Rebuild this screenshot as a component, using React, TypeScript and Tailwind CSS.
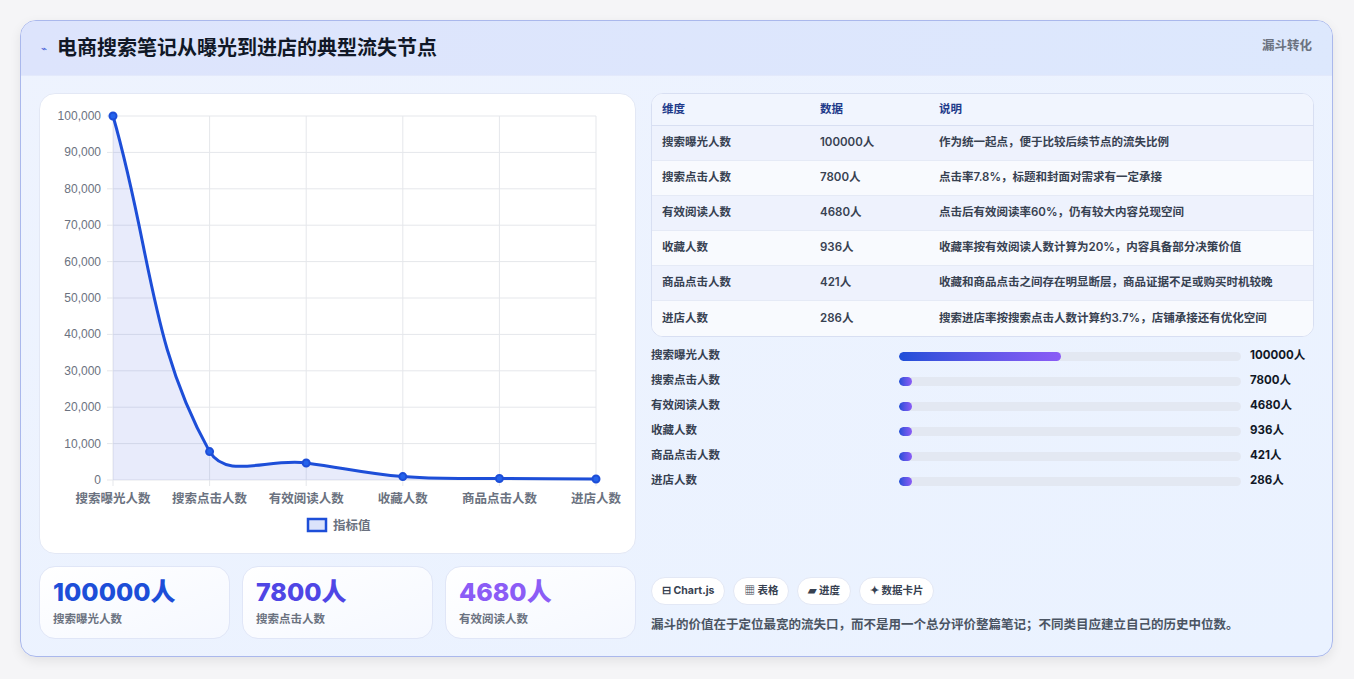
import React from "react";

const labels = ["搜索曝光人数", "搜索点击人数", "有效阅读人数", "收藏人数", "商品点击人数", "进店人数"];
const values = [100000, 7800, 4680, 936, 421, 286];
const notes = [
  "作为统一起点，便于比较后续节点的流失比例",
  "点击率7.8%，标题和封面对需求有一定承接",
  "点击后有效阅读率60%，仍有较大内容兑现空间",
  "收藏率按有效阅读人数计算为20%，内容具备部分决策价值",
  "收藏和商品点击之间存在明显断层，商品证据不足或购买时机较晚",
  "搜索进店率按搜索点击人数计算约3.7%，店铺承接还有优化空间",
];

const X0 = 73, X1 = 556, Y0 = 22, Y1 = 386;
const pts = values.map((v, i) => ({ x: X0 + ((X1 - X0) * i) / 5, y: Y1 - (v / 100000) * (Y1 - Y0) }));

function pathD() {
  const t = 0.4;
  const cps = pts.map((cur, i) => {
    const prev = pts[i - 1] || cur;
    const next = pts[i + 1] || cur;
    const d01 = Math.hypot(cur.x - prev.x, cur.y - prev.y);
    const d12 = Math.hypot(next.x - cur.x, next.y - cur.y);
    const s01 = d01 / (d01 + d12 || 1);
    const s12 = d12 / (d01 + d12 || 1);
    const fa = t * s01, fb = t * s12;
    return {
      p: { x: cur.x - fa * (next.x - prev.x), y: cur.y - fa * (next.y - prev.y) },
      n: { x: cur.x + fb * (next.x - prev.x), y: cur.y + fb * (next.y - prev.y) },
    };
  });
  let d = `M${pts[0].x},${pts[0].y}`;
  for (let i = 1; i < pts.length; i++) {
    const a = cps[i - 1].n, b = cps[i].p;
    d += ` C${a.x},${Math.min(a.y, Y1)} ${b.x},${Math.min(b.y, Y1)} ${pts[i].x},${pts[i].y}`;
  }
  return d;
}

function Chart() {
  const d = pathD();
  return (
    <svg width="597" height="460" viewBox="0 0 597 460" className="block">
      {Array.from({ length: 11 }).map((_, i) => {
        const y = Y0 + (i * (Y1 - Y0)) / 10;
        return (
          <g key={i}>
            <line x1={X0 - 6} x2={X1} y1={y} y2={y} stroke="#e5e7eb" />
            <text x={61} y={y + 4} textAnchor="end" fontSize="12" fill="#6b7280" fontFamily="Liberation Sans, sans-serif">
              {(100000 - i * 10000).toLocaleString("en-US")}
            </text>
          </g>
        );
      })}
      {pts.map((p, i) => (
        <line key={i} x1={p.x} x2={p.x} y1={Y0} y2={Y1 + 6} stroke="#e5e7eb" />
      ))}
      <path d={`${d} L${X1},${Y1} L${X0},${Y1} Z`} fill="rgba(99,120,230,0.15)" />
      <path d={d} fill="none" stroke="#1d4ed8" strokeWidth="3" />
      {pts.map((p, i) => (
        <circle key={i} cx={p.x} cy={p.y} r="3.5" fill="#2563eb" stroke="#1d4ed8" strokeWidth="2" />
      ))}
      {pts.map((p, i) => (
        <text key={i} x={p.x} y={409} textAnchor="middle" fontSize="12.5" fontWeight="600" fill="#6b7280" fontFamily="'Noto Sans CJK SC', sans-serif">
          {labels[i]}
        </text>
      ))}
      <rect x={268} y={425} width={18} height={12} fill="#dbe3fb" stroke="#1d4ed8" strokeWidth="2.5" />
      <text x={293} y={436} fontSize="12.5" fontWeight="600" fill="#6b7280" fontFamily="'Noto Sans CJK SC', sans-serif">指标值</text>
    </svg>
  );
}

export default function App() {
  const font = { fontFamily: "Inter, 'Noto Sans CJK SC', sans-serif" };
  return (
    <div className="w-[1354px] h-[679px] bg-[#f5f5f7] pt-5 px-5" style={font}>
      <div className="w-[1313px] h-[637px] rounded-2xl border border-[#aab8ec] bg-gradient-to-br from-[#eef3fe] to-[#eaf2ff] shadow-[0_4px_12px_rgba(0,0,0,0.08)] overflow-hidden flex flex-col">
        <div className="h-[55px] shrink-0 bg-gradient-to-r from-[#dde4fc] to-[#dde8fd] flex items-center justify-between pl-5 pr-5 border-b border-[#e3e9fb]">
          <div className="flex items-center gap-2.5">
            <span className="text-[#4a63d8] text-[10px]">⌁</span>
            <span className="text-[20px] font-bold text-[#111827]">电商搜索笔记从曝光到进店的典型流失节点</span>
          </div>
          <span className="self-start mt-4 text-[12.5px] font-semibold text-[#6b7280]">漏斗转化</span>
        </div>
        <div className="flex gap-[15px] pl-[18px] pr-[18px] pt-[17px]">
          <div className="w-[597px] flex flex-col gap-[12px]">
            <div className="h-[461px] bg-white rounded-2xl border border-[#e3e8f5]">
              <Chart />
            </div>
            <div className="flex gap-3">
              {[["100000人", "text-[#1d4ed8]", "搜索曝光人数"], ["7800人", "text-[#4f46e5]", "搜索点击人数"], ["4680人", "text-[#8b5cf6]", "有效阅读人数"]].map(([v, c, l]) => (
                <div key={l} className="flex-1 h-[73px] rounded-2xl border border-[#e0e6f7] bg-gradient-to-br from-white to-[#f5f8ff] px-[13px] pt-[9px]">
                  <div className={`text-[25px] font-extrabold leading-[32px] ${c}`}>{v}</div>
                  <div className="text-[11.5px] font-semibold text-[#6b7280] mt-[3px]">{l}</div>
                </div>
              ))}
            </div>
          </div>
          <div className="flex-1 flex flex-col">
            <div className="rounded-xl border border-[#d8dff2] overflow-hidden bg-white">
              <div className="flex h-[32px] items-center bg-[#f1f5fe] border-b border-[#d8dff2] text-[11.5px] font-semibold text-[#1e3a8a]">
                <div className="w-[158px] pl-[10px]">维度</div>
                <div className="w-[119px] pl-[10px]">数据</div>
                <div className="pl-[10px]">说明</div>
              </div>
              {labels.map((l, i) => (
                <div key={l} className={`flex h-[35px] items-center text-[11.5px] font-semibold text-[#374151] ${i < 5 ? "border-b border-[#e5eaf6]" : ""} ${i % 2 === 0 ? "bg-[#eef2fd]" : "bg-[#f8fafe]"}`}>
                  <div className="w-[158px] pl-[10px]">{l}</div>
                  <div className="w-[119px] pl-[10px]">{values[i]}人</div>
                  <div className="pl-[10px]">{notes[i]}</div>
                </div>
              ))}
            </div>
            <div className="flex flex-col gap-[7px] mt-[10px]">
              {labels.map((l, i) => (
                <div key={l} className="flex items-center h-[18px] text-[11.5px] font-semibold text-[#374151]">
                  <div className="w-[248px]">{l}</div>
                  <div className="w-[342px] h-[9px] rounded-full bg-[#e3e8f2] overflow-hidden">
                    <div className="h-full rounded-full bg-gradient-to-r from-[#1d4ed8] to-[#8b5cf6]" style={{ width: `${Math.max(13, (values[i] / 100000) * 162)}px` }} />
                  </div>
                  <div className="pl-[9px] font-bold text-[#111827]">{values[i]}人</div>
                </div>
              ))}
            </div>
            <div className="flex gap-[8px] mt-[87px]">
              {["⊟ Chart.js", "▦ 表格", "▰ 进度", "✦ 数据卡片"].map((c) => (
                <div key={c} className="h-[28px] px-[10px] flex items-center rounded-full bg-white border border-[#e3e8f5] text-[10.5px] font-bold text-[#374151]">{c}</div>
              ))}
            </div>
            <div className="mt-[11px] text-[12.5px] font-semibold text-[#4b5563]">漏斗的价值在于定位最宽的流失口，而不是用一个总分评价整篇笔记；不同类目应建立自己的历史中位数。</div>
          </div>
        </div>
      </div>
    </div>
  );
}
